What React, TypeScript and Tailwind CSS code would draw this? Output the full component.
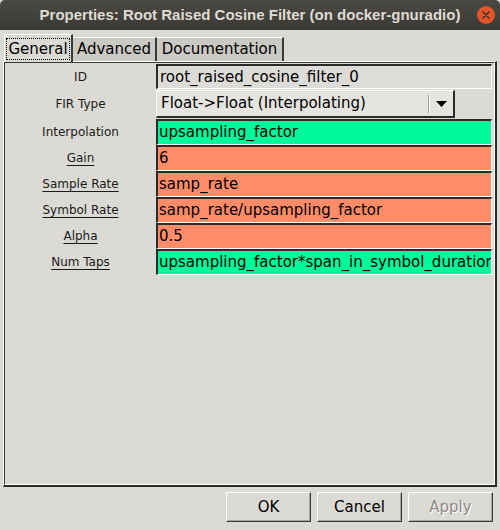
import React from "react";

type Param = {
  label: string;
  value: string;
  bg: string;
  underline?: boolean;
};

const params: Param[] = [
  { label: "Interpolation", value: "upsampling_factor", bg: "bg-[#00fa9a]" },
  { label: "Gain", value: "6", bg: "bg-[#ff8c69]", underline: true },
  { label: "Sample Rate", value: "samp_rate", bg: "bg-[#ff8c69]", underline: true },
  { label: "Symbol Rate", value: "samp_rate/upsampling_factor", bg: "bg-[#ff8c69]", underline: true },
  { label: "Alpha", value: "0.5", bg: "bg-[#ff8c69]", underline: true },
  { label: "Num Taps", value: "upsampling_factor*span_in_symbol_durations", bg: "bg-[#00fa9a]", underline: true },
];

function Label({ text, underline }: { text: string; underline?: boolean }) {
  return (
    <div className="w-[151px] shrink-0 text-center text-[12px] text-[#1a1a1a]">
      <span className={underline ? "underline decoration-1 underline-offset-[3px]" : ""}>{text}</span>
    </div>
  );
}

function Entry({ value, bg }: { value: string; bg: string }) {
  return (
    <div
      className={`flex-1 min-w-0 h-[26px] ${bg} border-t-2 border-l-2 border-t-[#2a2a2a] border-l-[#2a2a2a] border-b border-r border-b-white border-r-white flex items-center pl-[1px] overflow-hidden whitespace-nowrap text-[15px] text-black`}
    >
      {value}
    </div>
  );
}

export default function App() {
  return (
    <div
      className="w-[500px] h-[530px] bg-[#dcdad5] flex flex-col overflow-hidden"
      style={{ fontFamily: "'DejaVu Sans', sans-serif" }}
    >
      {/* Title bar */}
      <div className="relative h-[30px] shrink-0 rounded-t-[5px] bg-gradient-to-b from-[#4a4944] to-[#3a3935] flex items-center justify-center">
        <span
          className="text-[15px] font-bold text-[#dfdbd2]"
          style={{ fontFamily: "'Liberation Sans', sans-serif" }}
        >
          Properties: Root Raised Cosine Filter (on docker-gnuradio)
        </span>
        <div className="absolute right-[5px] top-[6px] w-[18px] h-[18px] rounded-full bg-[#e2552a] flex items-center justify-center">
          <svg width="8" height="8" viewBox="0 0 8 8">
            <path d="M1 1L7 7M7 1L1 7" stroke="#3a2a22" strokeWidth="1.4" strokeLinecap="round" />
          </svg>
        </div>
      </div>

      {/* Tabs */}
      <div className="flex items-end h-[28px] mt-[3px] pl-[4px] shrink-0">
        <div className="h-[28px] w-[69px] bg-[#dcdad5] border-t border-l border-white border-r-2 border-r-[#3a3a3a] flex items-center justify-center relative z-10 -mb-[1px]">
          <span className="text-[15px] text-black border border-dotted border-black px-[1px] leading-[20px]">General</span>
        </div>
        <div className="h-[24px] w-[84px] bg-[#cbc9c3] border-t border-white border-r-2 border-r-[#3a3a3a] flex items-center justify-center text-[15px] text-black">
          Advanced
        </div>
        <div className="h-[24px] w-[127px] bg-[#cbc9c3] border-t border-white border-r-2 border-r-[#3a3a3a] flex items-center justify-center text-[15px] text-black">
          Documentation
        </div>
      </div>

      {/* Notebook page */}
      <div className="mx-[3px] h-[426px] shrink-0 border-t border-l border-white border-b-2 border-r-2 border-b-[#2a2a2a] border-r-[#2a2a2a]">
        <div className="h-full border-t border-l border-[#3a3a3a] border-b border-r border-b-white border-r-white flex flex-col pt-[1px] pr-[2px]">
          {/* ID */}
          <div className="flex items-center h-[25px]">
            <Label text="ID" />
            <div className="flex-1 h-[25px] bg-[#dedcd8] border-t-2 border-l-2 border-t-[#2a2a2a] border-l-[#2a2a2a] border-b border-r border-b-white border-r-white flex items-center pl-[2px] text-[15px] text-black whitespace-nowrap overflow-hidden">
              root_raised_cosine_filter_0
            </div>
          </div>

          {/* FIR Type */}
          <div className="flex items-center h-[30px]">
            <Label text="FIR Type" />
            <div className="w-[299px] h-[28px] bg-[#e6e4e0] border-t border-l border-white border-b-2 border-r-2 border-b-[#2a2a2a] border-r-[#2a2a2a] flex items-center pl-[4px] text-[15px] text-black">
              <span className="flex-1 whitespace-nowrap">Float-&gt;Float (Interpolating)</span>
              <div className="h-[18px] border-l border-l-[#9a9a96] border-r border-r-white mr-[6px]" />
              <svg width="11" height="6" viewBox="0 0 11 6" className="mr-[6px]">
                <path d="M0 0H11L5.5 6Z" fill="#000" />
              </svg>
            </div>
          </div>

          <div className="flex flex-col">
            {params.map((p) => (
              <div key={p.label} className="flex items-center h-[26px]">
                <Label text={p.label} underline={p.underline} />
                <Entry value={p.value} bg={p.bg} />
              </div>
            ))}
          </div>
        </div>
      </div>

      {/* Buttons */}
      <div className="flex justify-end gap-[6px] pr-[7px] pt-[5px]">
        {["OK", "Cancel", "Apply"].map((b) => (
          <div
            key={b}
            className={`w-[85px] h-[30px] bg-[#dcdad5] border-t border-l border-white border-b border-r border-b-[#3a3a3a] border-r-[#3a3a3a] shadow-[inset_-1px_-1px_0_#a8a59f] flex items-center justify-center text-[15px] ${
              b === "Apply" ? "text-[#8c8a85] [text-shadow:1px_1px_0_#ffffff]" : "text-black"
            }`}
          >
            {b}
          </div>
        ))}
      </div>
    </div>
  );
}
